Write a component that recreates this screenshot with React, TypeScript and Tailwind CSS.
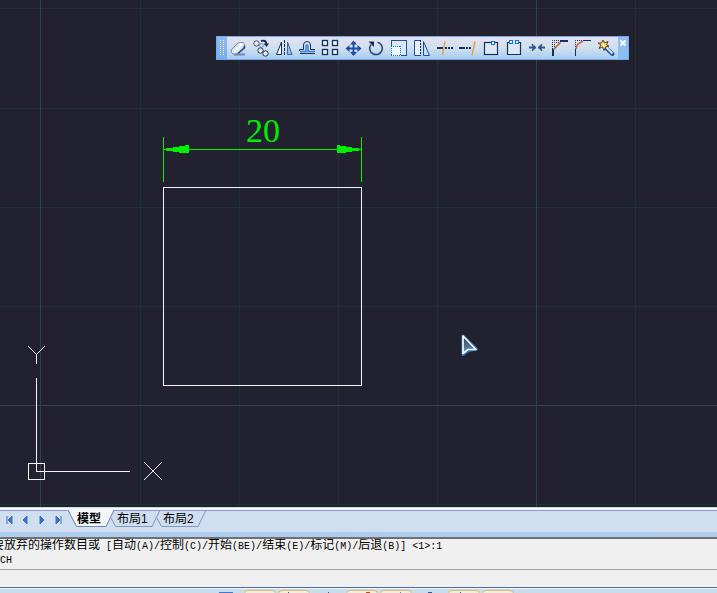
import type { ReactNode } from "react";

const NAVY = "#16305e";
const BLUE = "#1f4fa0";

const tools: { label: string; icon: ReactNode }[] = [
  {
    label: "删除",
    icon: (
      <>
        <path d="M5 16.500H16" stroke="#6d87bd" strokeWidth="2" />
        <path d="M8 6Q9.500 4.500 11.500 4.500H14Q15.500 5 15.500 7.500L14.500 10L9 15Q8 16 6 16H4Q2 15 2 12Z" fill="#dbe3ef" stroke="#6d86ad" />
        <path d="M10 6.500H12.500L5 14" stroke="#ffffff" strokeWidth="2" />
        <path d="M15.500 7.500V10L9 15.500" stroke="#2a4884" strokeWidth="1.500" />
      </>
    ),
  },
  {
    label: "复制",
    icon: (
      <>
        <circle cx="4.500" cy="5.500" r="2.700" fill="#edf1fa" stroke="#35517f" />
        <circle cx="9.500" cy="7.500" r="1.800" fill="#edf1fa" stroke="#6d86ad" />
        <circle cx="8.500" cy="12.500" r="2.700" fill="#edf1fa" stroke={NAVY} />
        <circle cx="13.500" cy="15.500" r="2.700" fill="#edf1fa" stroke={NAVY} />
        <path d="M9 3Q14 1.500 14.500 6" stroke={NAVY} strokeWidth="2" />
        <path d="M11.500 5.500H17L14.500 9Z" fill={NAVY} />
      </>
    ),
  },
  {
    label: "镜像",
    icon: (
      <>
        <path d="M6.500 4V16.500H1.500Z" fill="#f3f6fb" stroke={NAVY} />
        <path d="M12.500 4V16.500H17Z" fill="#9ebbe1" stroke="#40659f" />
        <path d="M9.500 2V18" stroke={NAVY} strokeDasharray="3 1" />
      </>
    ),
  },
  {
    label: "偏移",
    icon: (
      <>
        <path d="M1.500 13V11.500H5.500V7Q5.500 3.500 9 3.500T12.500 7V11.500H17" stroke={NAVY} />
        <path d="M2 15.500H17" stroke={NAVY} />
        <path d="M2 13.500H8V8Q9 6 10 8V13.500H17" stroke="#3d7bd8" strokeWidth="1.500" />
      </>
    ),
  },
  {
    label: "阵列",
    icon: (
      <>
        {[1.5, 11.5].map((x) =>
          [2.5, 11.5].map((y) => (
            <rect key={`${x}-${y}`} x={x} y={y} width="5" height="5" fill="#eef3fa" stroke={NAVY} strokeWidth="1.300" />
          )),
        )}
      </>
    ),
  },
  {
    label: "移动",
    icon: (
      <>
        <path d="M9.500 4V17M3 10.500H16" stroke={BLUE} strokeWidth="2" />
        <path d="M9.500 2.500L13 6.500H6ZM9.500 18L13 14H6ZM1.500 10.500L5.500 7V14ZM17.500 10.500L13.500 7V14Z" fill={BLUE} />
        <path d="M8 9L9 8M11 12L10 13" stroke="#a9c8ee" />
      </>
    ),
  },
  {
    label: "旋转",
    icon: (
      <>
        <path d="M10.500 4.200A6.300 6.300 0 1 1 4 6.500" stroke="#304c79" strokeWidth="1.600" />
        <path d="M1.500 3.500H7V9Z" fill={NAVY} />
      </>
    ),
  },
  {
    label: "缩放",
    icon: (
      <>
        <rect x="1.500" y="2.500" width="15" height="15" fill="#dce8f5" stroke={BLUE} />
        <rect x="1" y="8" width="10" height="10" fill="#eff7ff" />
        <path d="M1.500 8V18M10.500 8V18M1 8.500H11M1 17.500H11" stroke="#006fe6" strokeDasharray="1 1" shapeRendering="crispEdges" strokeWidth="1" />
      </>
    ),
  },
  {
    label: "拉伸",
    icon: (
      <>
        <path d="M7 2.500H1.500V17.500H7" fill="#e9f0fa" stroke={BLUE} />
        <path d="M7.500 2V18" stroke={NAVY} strokeDasharray="2 1" />
        <path d="M10.500 3.500V17.500H16.500Z" fill="#c8dff3" stroke={BLUE} />
      </>
    ),
  },
  {
    label: "修剪",
    icon: (
      <>
        <path d="M1 10H7M9 10H11M12 10H14M15 10H17" stroke={NAVY} strokeWidth="2" />
        <path d="M9 3.500L6.500 17" stroke="#e3a14b" strokeWidth="1.500" />
      </>
    ),
  },
  {
    label: "延伸",
    icon: (
      <>
        <path d="M0 10H6M7 10H9M10 10H12" stroke={NAVY} strokeWidth="2" />
        <path d="M16 3.500L13 17" stroke="#e3a14b" strokeWidth="1.500" />
      </>
    ),
  },
  {
    label: "打断于点",
    icon: (
      <>
        <rect x="2.500" y="4.500" width="13" height="12" fill="#dce9f5" stroke={NAVY} strokeWidth="1.200" />
        <rect x="9.500" y="3.500" width="3" height="3" fill="#fff" stroke="#0873e0" />
      </>
    ),
  },
  {
    label: "打断",
    icon: (
      <>
        <path d="M4 4.500H2.500V16.500H15.500V4.500H14" fill="#dce9f5" stroke={NAVY} strokeWidth="1.200" />
        <rect x="4.500" y="2.500" width="3" height="3" fill="#fff" stroke="#0873e0" />
        <rect x="10.500" y="2.500" width="3" height="3" fill="#fff" stroke="#0873e0" />
      </>
    ),
  },
  {
    label: "合并",
    icon: (
      <>
        <path d="M1 9.500H6M12 9.500H17" stroke="#31577f" strokeWidth="2" />
        <path d="M4 6L8 9.500L4 13L5.500 9.500ZM14 6L10 9.500L14 13L12.500 9.500Z" fill={BLUE} stroke="#31577f" />
      </>
    ),
  },
  {
    label: "倒角",
    icon: (
      <>
        <path d="M9 3H17M2 18V11" stroke={NAVY} strokeWidth="2" />
        <path d="M1.500 11V2.500H9M3.500 9V4.500H8" stroke={NAVY} strokeDasharray="1 1" />
        <path d="M2.500 11.500L9.500 4.500" stroke="#c8641c" strokeWidth="1.600" />
      </>
    ),
  },
  {
    label: "圆角",
    icon: (
      <>
        <path d="M9 2.500H17M1.500 18V11" stroke={NAVY} />
        <path d="M1.500 11V2.500H9" stroke={NAVY} strokeDasharray="1 1" />
        <path d="M2 11Q2.500 5 9 3.500" stroke="#d06738" strokeWidth="1.600" />
      </>
    ),
  },
  {
    label: "分解",
    icon: (
      <>
        <path d="M8 9L15.500 16" stroke={BLUE} strokeWidth="4" strokeLinecap="round" />
        <path d="M9 9L15.500 15.500" stroke="#d2e6fc" strokeWidth="2" />
        <path d="M6 2L7.500 5L11 3.500L9.500 7L12 8L8.500 9L7 12.500L5.500 9L2 10.500L4 7L1 5L4.500 5Z" fill="#fbd966" stroke="#5d461e" />
        <path d="M5 7H8M6.500 5.500V8.500" stroke="#fff6bd" />
      </>
    ),
  },
];

const navigation = [
  { label: "第一个", path: "M6 5V13M11 5V13L7 9Z" },
  { label: "上一个", path: "M10 5V13L6 9Z" },
  { label: "下一个", path: "M7 5V13L11 9Z" },
  { label: "最后一个", path: "M12 5V13M7 5V13L11 9Z" },
];

const statusItems = [
  { label: "捕捉", on: false, mark: "bg-[#3f78d0] w-3.5" },
  { label: "栅格", on: true, mark: "" },
  { label: "正交", on: true, mark: "bg-[#2c5793] w-px mr-3" },
  { label: "极轴", on: false, mark: "bg-[#2c5793] w-px" },
  { label: "对象捕捉", on: true, mark: "bg-[#b84b18] w-1 ml-3" },
  { label: "对象追踪", on: true, mark: "bg-[#4a83d8] w-px ml-2" },
  { label: "动态坐标", on: false, mark: "bg-[#2c5793] w-1" },
  { label: "动态输入", on: true, mark: "bg-[#2c5793] w-px mr-2" },
  { label: "线宽", on: true, mark: "" },
];

function Toolbar() {
  return (
    <div
      role="toolbar"
      aria-label="修改"
      className="absolute left-[216px] top-9 flex h-6 border border-[#79aaf0] bg-[#8fbbef]"
    >
      <div className="flex w-[10px] items-center justify-center bg-linear-to-b from-[#8fb9f0] to-[#78adf0]">
        <svg width="4" height="16" aria-hidden="true">
          <path d="M.5 0V16M3.500 0V16" stroke="#f5efda" strokeDasharray="1 1" />
        </svg>
      </div>
      <div className="flex bg-linear-to-b from-[#e5e1ef] via-[#cfe0f0] to-[#a9cdf0]">
        {tools.map((tool) => (
          <button key={tool.label} aria-label={tool.label} className="flex w-[23px] items-center justify-center">
            <svg width="19" height="20" viewBox="0 0 19 20" fill="none">
              {tool.icon}
            </svg>
          </button>
        ))}
      </div>
      <button aria-label="关闭" className="flex w-[10px] justify-center bg-linear-to-b from-[#94b9ed] to-[#85c1f3] pt-[3px]">
        <svg width="6" height="6" viewBox="0 0 6 6">
          <path d="M.5 .5L5.500 5.500M5.500 .5L.5 5.500" stroke="#fff" strokeWidth="2" />
        </svg>
      </button>
    </div>
  );
}

function Drawing() {
  return (
    <svg className="absolute inset-0 h-full w-full" fill="none" shapeRendering="crispEdges" role="img" aria-label="模型空间">
      <defs>
        <linearGradient id="pointer" x1="0" y1="0" x2="0" y2="1">
          <stop offset="0" stopColor="#26384c" />
          <stop offset="1" stopColor="#6f9dbd" />
        </linearGradient>
      </defs>
      <g stroke="#1f3134">
        {[140, 239, 338, 437, 635].map((x) => (
          <line key={x} x1={x + 0.5} x2={x + 0.5} y1="0" y2="100%" />
        ))}
        {[8, 108, 207, 306, 504].map((y) => (
          <line key={y} x1="0" x2="100%" y1={y + 0.5} y2={y + 0.5} />
        ))}
      </g>
      <g stroke="#2d414f">
        <line x1="40.500" x2="40.500" y1="0" y2="100%" />
        <line x1="536.500" x2="536.500" y1="0" y2="100%" />
        <line x1="0" x2="100%" y1="405.500" y2="405.500" />
      </g>
      <path d="M163.500 187.500H361.500V385.500H163.500Z" stroke="#f4f4f4" />
      <g fill="#00f000">
        <path d="M163 137H164V182H163ZM361 137H362V182H361ZM164 149H361V150H164Z" />
        <path d="M166 148H173V147H179V146H185V145H189V153H179V152H173V151H166ZM359 148H352V147H346V146H340V145H337V153H346V152H352V151H359Z" />
      </g>
      <text x="246" y="142" fill="#00ef00" className="font-['Liberation_Serif',serif] text-[34px]">20</text>
      <g stroke="#f4f4f4">
        <path d="M36.500 378V471.500H130M28.500 463.500H44.500V479.500H28.500Z" />
        <path d="M28 346L36.500 354.500L45 346M36.500 354V364M144 462L162 480M162 462L144 480" />
      </g>
      <g shapeRendering="auto" strokeLinejoin="round">
        <path d="M463 336V354.500L468.500 350.500L476.500 349Z" stroke="#2878b3" strokeWidth="3" />
        <path d="M463 336V353.500L468 349.500H476Z" fill="url(#pointer)" stroke="#f8fbff" strokeWidth="1.700" />
      </g>
    </svg>
  );
}

function LayoutTabs() {
  return (
    <nav className="border-t border-[#cadbe9] bg-[#cfdfef]">
      <div className="h-0.5 bg-[#f4f5f7]" />
      <div className="flex h-5 border-t border-[#8c9ccb] pl-px">
        {navigation.map((item) => (
          <button key={item.label} aria-label={item.label} className="h-[18px] w-4">
            <svg width="16" height="18" fill="#426ec0" stroke="#426ec0">
              <path d={item.path} strokeWidth="1" />
            </svg>
          </button>
        ))}
        <div role="tablist" className="ml-[3px] flex h-4">
          <button role="tab" aria-selected="true" className="relative w-[46px] pl-[9px] text-left text-[12px] leading-[14px] font-bold">
            <svg className="absolute -top-px left-0 overflow-visible" width="46" height="17" aria-hidden="true">
              <path d="M0 0L8.500 16.500H38L46 0" fill="#f4f5f7" stroke="#6e83b6" />
              <path d="M1 .5H45" stroke="#f4f5f7" />
            </svg>
            <span className="relative">模型</span>
          </button>
          {["1", "2"].map((number) => (
            <button key={number} role="tab" aria-selected="false" className="relative w-[46px] pl-[3px] text-left text-[12px] leading-[14px]">
              <svg className="absolute -top-px left-0 overflow-visible" width="46" height="17" aria-hidden="true">
                <path d="M-3 8L1.500 16.500H38L46 0" fill="none" stroke="#8194c2" />
              </svg>
              <span className="relative">布局{number}</span>
            </button>
          ))}
        </div>
      </div>
      <div className="h-0.5 bg-linear-to-r from-[#dcdcee] via-[#cfdfef] to-[#dcdcee]" />
      <div className="h-[5px] bg-[#abcdee]" />
    </nav>
  );
}

const prompt = "要放弃的操作数目或 [自动(A)/控制(C)/开始(BE)/结束(E)/标记(M)/后退(B)] <1>:1";

function CommandLine() {
  return (
    <section aria-label="命令行" className="overflow-hidden border-t-2 border-[#746d72] bg-[#f0f0f0]">
      <div className="h-[31px] border-b border-[#a2a398] text-[12px] whitespace-pre">
        <p className="-ml-2 h-[15px] leading-[13px]">
          {prompt.split(/([\x20-\x7e]+)/).map((part, index) => (
            <span key={index} className={index % 2 ? "font-['Liberation_Mono',monospace] text-[10px]" : ""}>
              {part}
            </span>
          ))}
        </p>
        <p className="font-['Liberation_Mono',monospace] text-[10px] leading-[13px]">CH</p>
      </div>
      <input aria-label="命令" className="block h-[18px] w-full border-b border-[#4f6ca5] bg-[#f0f0f0] px-1 text-[12px] outline-none" />
    </section>
  );
}

function StatusBar() {
  return (
    <footer className="flex h-[5px] gap-0.5 overflow-hidden border-t border-[#f3f4f6] bg-[#c7ddec] pl-[210px]">
      {statusItems.map((item) => (
        <button
          key={item.label}
          aria-label={item.label}
          className={`mt-px flex h-5 w-8 shrink-0 justify-center rounded-sm border pt-px ${item.on ? "border-[#d6bd79] bg-[#f1eee1]" : "border-transparent"}`}
        >
          <span className={`h-1 ${item.mark}`} />
        </button>
      ))}
    </footer>
  );
}

export default function App() {
  return (
    <div className="flex h-screen flex-col overflow-hidden font-['Liberation_Sans','Noto_Sans_CJK_SC',sans-serif] text-black">
      <main className="relative min-h-0 flex-1 overflow-hidden bg-[#212130]">
        <Drawing />
        <Toolbar />
      </main>
      <LayoutTabs />
      <CommandLine />
      <StatusBar />
    </div>
  );
}
